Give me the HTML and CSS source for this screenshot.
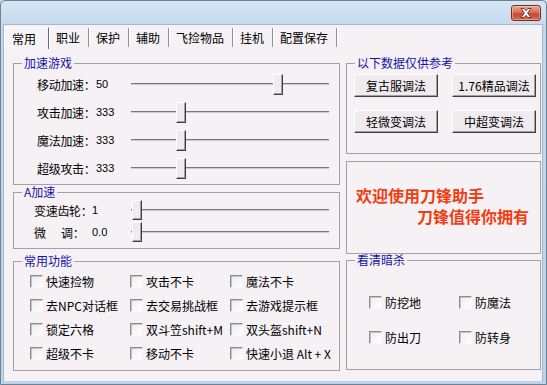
FILE: index.html
```html
<!DOCTYPE html>
<html lang="zh-CN">
<head>
<meta charset="utf-8">
<link rel="stylesheet" href="styles.css">
</head>
<body>
<div class="window">
  <div class="titlebar">
    <div class="close">
      <svg width="14" height="10" viewBox="0 0 14 10"><path d="M2 0.5h3l2 2.2 2-2.2h3l-3.4 4.5 3.4 4.5h-3l-2-2.2-2 2.2h-3l3.4-4.5z" fill="#fff" stroke="#5a2018" stroke-width="0.8" stroke-linejoin="round"/></svg>
    </div>
  </div>
  <div class="client">
    <div class="tabs">
      <div class="tab active">常用</div>
      <div class="tab">职业</div>
      <div class="tab">保护</div>
      <div class="tab">辅助</div>
      <div class="tab">飞捡物品</div>
      <div class="tab">挂机</div>
      <div class="tab">配置保存</div>
    </div>
    <div class="panel">
      <div class="col col-left">
        <fieldset class="group g-speed">
          <legend>加速游戏</legend>
          <div class="srow"><span class="lbl">移动加速：</span><span class="val">50</span><div class="slider"><div class="track"></div><div class="thumb" style="left:142px"></div></div></div>
          <div class="srow"><span class="lbl">攻击加速：</span><span class="val">333</span><div class="slider"><div class="track"></div><div class="thumb" style="left:45px"></div></div></div>
          <div class="srow"><span class="lbl">魔法加速：</span><span class="val">333</span><div class="slider"><div class="track"></div><div class="thumb" style="left:45px"></div></div></div>
          <div class="srow"><span class="lbl">超级攻击：</span><span class="val">333</span><div class="slider"><div class="track"></div><div class="thumb" style="left:45px"></div></div></div>
        </fieldset>
        <fieldset class="group g-a">
          <legend>A加速</legend>
          <div class="srow small"><span class="lbl">变速齿轮：</span><span class="val">1</span><div class="slider"><div class="track"></div><div class="thumb" style="left:1px"></div></div></div>
          <div class="srow small"><span class="lbl"><span class="wide">微</span>调：</span><span class="val">0.0</span><div class="slider"><div class="track"></div><div class="thumb" style="left:1px"></div></div></div>
        </fieldset>
        <fieldset class="group g-common">
          <legend>常用功能</legend>
          <div class="checks">
            <label class="chk"><span class="box"></span>快速捡物</label>
            <label class="chk"><span class="box"></span>攻击不卡</label>
            <label class="chk"><span class="box"></span>魔法不卡</label>
            <label class="chk"><span class="box"></span>去NPC对话框</label>
            <label class="chk"><span class="box"></span>去交易挑战框</label>
            <label class="chk"><span class="box"></span>去游戏提示框</label>
            <label class="chk"><span class="box"></span>锁定六格</label>
            <label class="chk"><span class="box"></span>双斗笠shift+M</label>
            <label class="chk"><span class="box"></span>双头盔shift+N</label>
            <label class="chk"><span class="box"></span>超级不卡</label>
            <label class="chk"><span class="box"></span>移动不卡</label>
            <label class="chk"><span class="box"></span>快速小退 Alt + X</label>
          </div>
        </fieldset>
      </div>
      <div class="col col-right">
        <fieldset class="group g-ref">
          <legend>以下数据仅供参考</legend>
          <div class="btns">
            <button class="btn">复古服调法</button>
            <button class="btn">1.76精品调法</button>
            <button class="btn">轻微变调法</button>
            <button class="btn">中超变调法</button>
          </div>
        </fieldset>
        <div class="welcome">
          <div class="w1">欢迎使用刀锋助手</div>
          <div class="w2">刀锋值得你拥有</div>
        </div>
        <fieldset class="group g-anti">
          <legend>看清暗杀</legend>
          <div class="checks2">
            <label class="chk"><span class="box"></span>防挖地</label>
            <label class="chk"><span class="box"></span>防魔法</label>
            <label class="chk"><span class="box"></span>防出刀</label>
            <label class="chk"><span class="box"></span>防转身</label>
          </div>
        </fieldset>
      </div>
    </div>
  </div>
</div>
</body>
</html>
```
FILE: styles.css
```css
* { box-sizing: border-box; }
html, body { margin: 0; padding: 0; }
body {
  width: 547px; height: 385px; overflow: hidden;
  font-family: "Liberation Sans", "Noto Sans CJK SC", sans-serif;
  font-size: 12px; color: #000;
  background: #c6dbef;
}
.window {
  width: 547px; height: 385px;
  border: 1px solid #6f8195;
  border-radius: 5px 5px 0 0;
  background: linear-gradient(#d6e5f4, #c2d7ec 30px, #bcd3ea);
  padding: 0 3px 3px 2px;
  display: flex; flex-direction: column;
}
.titlebar {
  height: 23px; flex: none;
  display: flex; justify-content: flex-end; align-items: flex-start;
  padding: 4px 2px 0 0;
}
.close {
  width: 30px; height: 16px;
  border: 1px solid #7d2a1c; border-radius: 3px;
  background: linear-gradient(#e9a797, #d8705b 45%, #c64a30 55%, #d36a4f);
  box-shadow: inset 0 0 0 1px rgba(255,255,255,.35);
  display: flex; align-items: center; justify-content: center;
}
.client {
  flex: 1;
  background: #f5f1f5;
  border: 1px solid #a6b8cb;
  border-bottom: none;
  display: flex; flex-direction: column;
}
.tabs {
  display: flex; height: 23px; margin-top: 2px; padding-left: 0;
  align-items: stretch;
}
.tab {
  padding: 0 8px 0 6px; line-height: 20px;
  margin-top: 1px;
  border-right: 1px solid #8f8f8f;
  box-shadow: 1px 0 0 #fff;
  margin-right: 1px;
  height: 19px;
  font-family: "Noto Sans CJK SC", sans-serif;
}
.tab.active {
  margin-top: 0; height: 22px; line-height: 22px;
  padding: 0 12px 0 7px;
  border-left: 1px solid #fff; border-top: 1px solid #fff;
  border-right: 1px solid #6a6a6a;
  background: #f7f4f7;
}
.panel {
  display: grid;
  grid-template-columns: 327px 195px;
  column-gap: 6px;
  padding: 7px 0 0 9px;
}
.col { display: flex; flex-direction: column; }
.group {
  margin: 0; padding: 0;
  border: 1px solid #a3a3a3;
  min-width: 0;
}
.group legend {
  margin-left: 8px; padding: 0 2px;
  color: #1414a8; line-height: 12px; height: 12px;
  font-family: "Noto Sans CJK SC", sans-serif;
}
.g-speed { height: 128px; padding: 1px 0 0 0; }
.g-a { height: 63px; margin-top: 1px; padding: 1px 0 0 0; }
.g-common { height: 116px; margin-top: 6px; padding: 2px 0 0 0; }
.srow {
  height: 28px; display: flex; align-items: center;
  padding-left: 23px; white-space: nowrap;
}
.srow .lbl { width: 59px; flex: none; font-family: "Noto Sans CJK SC", sans-serif; letter-spacing: -0.3px; }
.srow .val { width: 35px; flex: none; font-size: 11px; }
.srow.small { height: 22px; padding-left: 20px; }
.srow.small .lbl { width: 58px; }
.srow.small .val { width: 39px; }
.wide { display: inline-block; width: 27px; }
.slider { position: relative; width: 198px; height: 100%; flex: none; }
.track {
  position: absolute; left: 0; right: 0; top: 50%;
  margin-top: -1px; height: 2px;
  border-top: 1px solid #787878; border-bottom: 1px solid #cdc9cd;
}
.thumb {
  position: absolute; top: 50%; margin-top: -10px;
  width: 10px; height: 21px;
  background: #efebef;
  border-left: 1px solid #fff; border-top: 1px solid #fff;
  border-right: 1px solid #404040; border-bottom: 1px solid #404040;
  box-shadow: inset -1px -1px 0 #a0a0a0;
}
.small .thumb { height: 20px; }
.checks {
  display: grid; grid-template-columns: 100px 100px 101px;
  grid-auto-rows: 24px;
  padding-left: 16px;
}
.chk {
  display: flex; align-items: center;
  font-family: "Noto Sans CJK SC", sans-serif; white-space: nowrap;
}
.box {
  width: 13px; height: 13px; flex: none;
  margin-right: 3px;
  background: linear-gradient(135deg, #ececec, #fff);
  border: 1px solid; border-color: #8d8d8d #f8f8f8 #f8f8f8 #8d8d8d;
  box-shadow: inset 1px 1px 0 #c4c4c4;
}
.g-ref { height: 97px; padding: 0; }
.btns {
  display: grid; grid-template-columns: 84px 84px; column-gap: 14px; row-gap: 13px;
  padding: 5px 0 0 7px;
}
.btn {
  height: 23px; padding: 0;
  font-family: "Noto Sans CJK SC", sans-serif; font-size: 12px; color: #000;
  background: #efebef;
  border: 1px solid; border-color: #fff #404040 #404040 #fff;
  box-shadow: inset -1px -1px 0 #a0a0a0;
}
.welcome {
  height: 93px; margin-top: 7px;
  border: 1px solid #a3a3a3;
  padding: 23px 0 0 9px;
  color: #f23c12; font-weight: bold; font-size: 16px;
  font-family: "Noto Sans CJK SC", sans-serif;
  line-height: 21px;
}
.w2 { padding-left: 61px; }
.g-anti { height: 116px; margin-top: 0; padding: 0; }
.checks2 {
  display: grid; grid-template-columns: 90px 80px; grid-auto-rows: 35px;
  padding: 19px 0 0 22px;
}
```
